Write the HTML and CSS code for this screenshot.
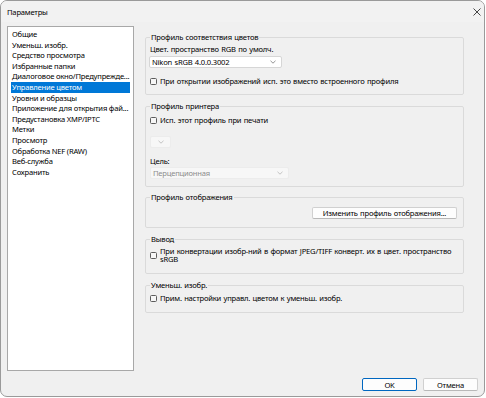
FILE: index.html
```html
<!DOCTYPE html>
<html lang="ru">
<head>
    <meta charset="UTF-8">
    <title>Параметры</title>
    <link rel="stylesheet" href="styles.css">
</head>
<body>
    <div class="window">
        <div class="titlebar">
            <span class="title">Параметры</span>
            <svg class="close" width="8" height="8" viewBox="0 0 8 8">
                <path d="M0.5 0.5 L7.5 7.5 M7.5 0.5 L0.5 7.5" stroke="#333" stroke-width="0.9" fill="none"/>
            </svg>
        </div>

        <div class="main">
            <ul class="nav">
                <li>Общие</li>
                <li>Уменьш. изобр.</li>
                <li>Средство просмотра</li>
                <li>Избранные папки</li>
                <li>Диалоговое окно/Предупрежде...</li>
                <li class="active">Управление цветом</li>
                <li>Уровни и образцы</li>
                <li>Приложение для открытия фай...</li>
                <li>Предустановка XMP/IPTC</li>
                <li>Метки</li>
                <li>Просмотр</li>
                <li>Обработка NEF (RAW)</li>
                <li>Веб-служба</li>
                <li>Сохранить</li>
            </ul>

            <div class="pane">
                <fieldset class="group g-match">
                    <legend>Профиль соответствия цветов</legend>
                    <div class="caption">Цвет. пространство RGB по умолч.</div>
                    <div class="combo combo-rgb">
                        <span>Nikon sRGB 4.0.0.3002</span>
                        <svg class="chev" width="6" height="4" viewBox="0 0 6 4"><path d="M0.5 0.8 L3 3.2 L5.5 0.8" stroke="#777" stroke-width="0.8" fill="none"/></svg>
                    </div>
                    <label class="check check-embed"><span class="box"></span>При открытии изображений исп. это вместо встроенного профиля</label>
                </fieldset>

                <fieldset class="group g-printer">
                    <legend>Профиль принтера</legend>
                    <label class="check"><span class="box"></span>Исп. этот профиль при печати</label>
                    <div class="combo combo-small disabled">
                        <svg class="chev" width="6" height="4" viewBox="0 0 6 4"><path d="M0.5 0.8 L3 3.2 L5.5 0.8" stroke="#b5b5b5" stroke-width="0.8" fill="none"/></svg>
                    </div>
                    <div class="caption caption-target">Цель:</div>
                    <div class="combo combo-intent disabled">
                        <span>Перцепционная</span>
                        <svg class="chev" width="6" height="4" viewBox="0 0 6 4"><path d="M0.5 0.8 L3 3.2 L5.5 0.8" stroke="#b5b5b5" stroke-width="0.8" fill="none"/></svg>
                    </div>
                </fieldset>

                <fieldset class="group g-display">
                    <legend>Профиль отображения</legend>
                    <div class="row-right">
                        <button class="btn btn-wide">Изменить профиль отображения...</button>
                    </div>
                </fieldset>

                <fieldset class="group g-output">
                    <legend>Вывод</legend>
                    <label class="check check-multi"><span class="box"></span><span class="multi">При конвертации изобр-ний в формат JPEG/TIFF конверт. их в цвет. пространство sRGB</span></label>
                </fieldset>

                <fieldset class="group g-thumb">
                    <legend>Уменьш. изобр.</legend>
                    <label class="check"><span class="box"></span>Прим. настройки управл. цветом к уменьш. изобр.</label>
                </fieldset>
            </div>
        </div>

        <div class="footer">
            <button class="btn btn-default">OK</button>
            <button class="btn">Отмена</button>
        </div>
    </div>
</body>
</html>
```

FILE: styles.css
```css
body {
    margin: 0;
    background-color: #ffffff;
    font-family: "Noto Sans", sans-serif;
    font-size: 7.6px;
    letter-spacing: -0.2px;
    word-spacing: 0.6px;
    color: #000000;
}

.window {
    box-sizing: border-box;
    width: 485px;
    height: 397px;
    border: 1px solid #9a9a9a;
    border-radius: 7px;
    background-color: #f0f0f0;
    overflow: hidden;
}

.titlebar {
    height: 21px;
    display: flex;
    align-items: center;
    justify-content: space-between;
    padding: 0 3px 0 6px;
    background-color: #f2f2f2;
}

/* left list */
.main {
    display: flex;
    padding: 4px 0 0 6px;
}

.nav {
    box-sizing: border-box;
    list-style: none;
    margin: 0;
    padding: 2px 3px 0 3px;
    width: 127px;
    height: 345px;
    background-color: #ffffff;
    border: 1px solid #a8a8a8;
    word-spacing: 0;
}

.nav li {
    height: 10.6px;
    line-height: 10.6px;
    padding-left: 1px;
    white-space: nowrap;
    overflow: hidden;
}

.nav li.active {
    background-color: #0078d7;
    color: #ffffff;
}

/* right pane */
.pane {
    width: 319px;
    margin-left: 11px;
    padding-top: 6px;
}

.group {
    margin: 0 0 6px 0;
    padding: 0 4px;
    border: 1px solid #dadada;
    border-radius: 2px;
}

.group legend {
    padding: 0 1px;
    line-height: 10px;
    height: 10px;
}

.g-match { padding-top: 2px; padding-bottom: 8px; }
.g-printer { padding-top: 4px; padding-bottom: 7px; margin-bottom: 5px; }
.g-display { padding-top: 5px; padding-bottom: 8px; }
.g-output { padding-top: 3px; padding-bottom: 10px; }
.g-thumb { padding-top: 3px; padding-bottom: 9px; }

.caption {
    line-height: 10px;
}

.caption-target {
    margin-top: 8px;
}

.combo {
    box-sizing: border-box;
    height: 12px;
    display: flex;
    align-items: center;
    justify-content: space-between;
    padding: 0 5px 0 2px;
    background-color: #ffffff;
    border: 1px solid #d6d6d6;
    border-radius: 2px;
}

.combo.disabled {
    background-color: #f7f7f7;
    border-color: #ececec;
    color: #8c8c8c;
}

.combo-rgb {
    width: 133px;
    margin: 2px 0 0 -1px;
}

.combo-small {
    width: 21px;
    margin-top: 11px;
    justify-content: flex-end;
    padding-right: 6px;
}

.combo-intent {
    width: 139px;
    margin-top: 1px;
}

.check {
    display: flex;
    align-items: center;
    line-height: 10px;
    white-space: nowrap;
}

.check-embed {
    margin-top: 8px;
}

.check .box {
    box-sizing: border-box;
    width: 7px;
    height: 7px;
    margin-right: 3px;
    flex-shrink: 0;
    border: 1px solid #5c5c5c;
    border-radius: 1.5px;
    background-color: #f6f6f6;
}

.check-multi .multi {
    white-space: normal;
    line-height: 8px;
    width: 296px;
}

.row-right {
    display: flex;
    justify-content: flex-end;
    padding-right: 2px;
}

.btn {
    box-sizing: border-box;
    height: 13px;
    padding: 0;
    font-family: inherit;
    font-size: 7.6px;
    letter-spacing: -0.2px;
    word-spacing: 0.6px;
    color: #000000;
    background-color: #fdfdfd;
    border: 1px solid #d0d0d0;
    border-bottom-color: #b8b8b8;
    border-radius: 2px;
}

.btn-wide {
    width: 145px;
    height: 12px;
}

.footer {
    display: flex;
    justify-content: flex-end;
    gap: 6px;
    margin-top: 7px;
    padding-right: 6px;
}

.footer .btn {
    width: 55px;
}

.btn-default {
    border: 1px solid #0067c0;
}
```
